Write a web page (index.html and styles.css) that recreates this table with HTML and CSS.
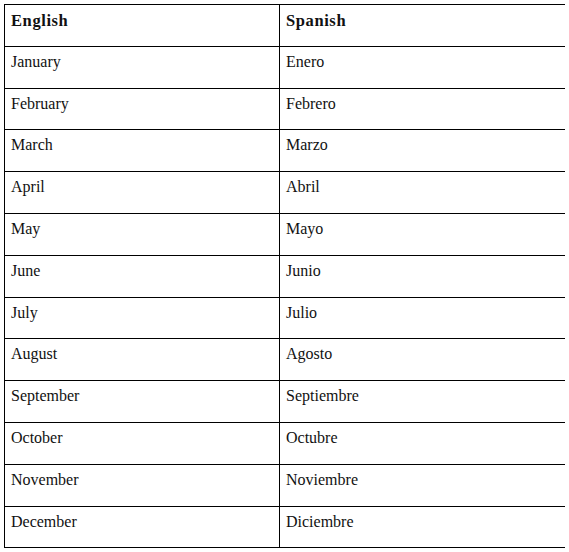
FILE: index.html
```html
<!DOCTYPE html>
<html>
<head>
<meta charset="utf-8">
<link rel="stylesheet" href="styles.css">
</head>
<body>
<table class="months">
  <thead>
    <tr><th class="col-en">English</th><th class="col-es">Spanish</th></tr>
  </thead>
  <tbody>
    <tr><td>January</td><td>Enero</td></tr>
    <tr><td>February</td><td>Febrero</td></tr>
    <tr><td>March</td><td>Marzo</td></tr>
    <tr><td>April</td><td>Abril</td></tr>
    <tr><td>May</td><td>Mayo</td></tr>
    <tr><td>June</td><td>Junio</td></tr>
    <tr><td>July</td><td>Julio</td></tr>
    <tr><td>August</td><td>Agosto</td></tr>
    <tr><td>September</td><td>Septiembre</td></tr>
    <tr><td>October</td><td>Octubre</td></tr>
    <tr><td>November</td><td>Noviembre</td></tr>
    <tr><td>December</td><td>Diciembre</td></tr>
  </tbody>
</table>
</body>
</html>
```
FILE: styles.css
```css
html, body {
  background: #ffffff;
}
body {
  margin: 4px;
  font-family: "Liberation Serif", "DejaVu Serif", serif;
  font-size: 16px;
  color: #111111;
}
.months {
  border-collapse: collapse;
  width: 563px;
  table-layout: fixed;
}
.months th,
.months td {
  border: 1px solid #000000;
  height: 41.8px;
  box-sizing: border-box;
  padding: 6px 7px 0 6px;
  vertical-align: top;
  text-align: left;
  line-height: 18px;
}
.months th {
  font-weight: bold;
  font-size: 16.5px;
  letter-spacing: 0.6px;
  padding-top: 7px;
}
.col-en {
  width: 275px;
}
.col-es {
  width: 288px;
}
```
